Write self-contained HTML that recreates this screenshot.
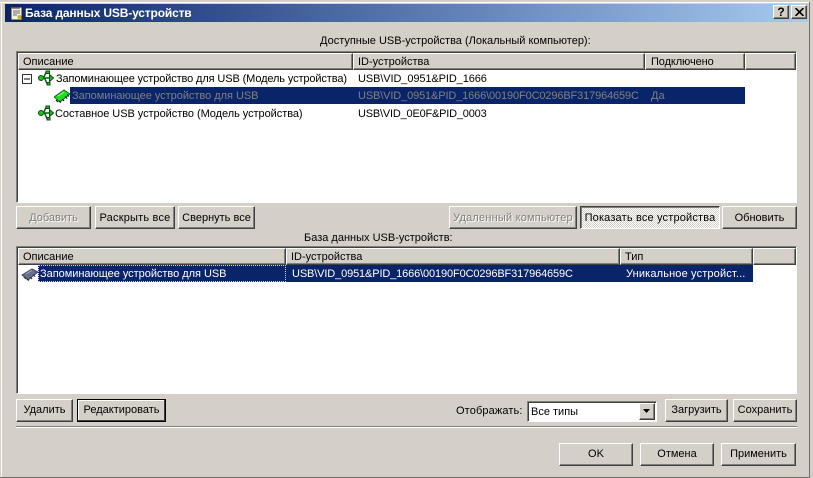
<!DOCTYPE html>
<html lang="ru"><head><meta charset="utf-8"><title>База данных USB-устройств</title>
<style>
html,body{margin:0;padding:0;width:813px;height:478px;overflow:hidden;background:#d4d0c8}
body{position:relative;font:11px/13px "Liberation Sans",sans-serif;color:#000}
.a{position:absolute;white-space:nowrap}
.t{position:absolute;white-space:nowrap;line-height:13px}
.btn{position:absolute;box-sizing:border-box;background:#d4d0c8;border:1px solid;border-color:#fff #404040 #404040 #fff;box-shadow:inset -1px -1px 0 #808080;text-align:center;line-height:21px;white-space:nowrap}
.up{line-height:23px}
.dis{color:#808080;text-shadow:1px 1px 0 #fff}
.def{border:1px solid #000;box-shadow:inset -1px -1px 0 #404040,inset 1px 1px 0 #fff;line-height:21px}
.chk{border-color:#404040 #fff #fff #404040;box-shadow:inset 1px 1px 0 #808080;background:repeating-conic-gradient(#fff 0 25%,#d4d0c8 0 50%) 0 0/2px 2px}
.list{position:absolute;box-sizing:border-box;background:#fff;border:1px solid;border-color:#808080 #fff #fff #808080;box-shadow:inset 1px 1px 0 #404040}
.hd{position:absolute;box-sizing:border-box;height:17px;background:#d4d0c8;border:1px solid;border-color:#fff #404040 #404040 #fff;box-shadow:inset -1px -1px 0 #808080;padding-left:4px;line-height:17px;white-space:nowrap}
.sel{position:absolute;background:#0a246a}
</style></head><body>
<div class="a" style="left:0;top:2px;width:810px;height:1px;background:#fff"></div>
<div class="a" style="left:1px;top:2px;width:1px;height:475px;background:#fff"></div>
<div class="a" style="left:0;top:477px;width:810px;height:1px;background:#6e6e6e"></div>
<div class="a" style="left:809px;top:2px;width:1px;height:476px;background:#6e6e6e"></div>

<div class="a" style="left:5px;top:4px;width:803px;height:18px;background:linear-gradient(90deg,#0a246a,#a6caf0)"></div>
<svg class="a" style="left:9px;top:6px" width="15" height="15" viewBox="0 0 15 15"><rect x="2" y="1" width="11" height="13" fill="#f4f2e8" stroke="#222"/><path d="M4 1v2M6 1v2M8 1v2M10 1v2" stroke="#222"/><path d="M4 5h7M4 7h7M4 9h4" stroke="#666"/><circle cx="10.500" cy="11" r="2" fill="#c8b020"/></svg>
<div class="t" style="left:25px;top:7px;color:#fff;font-weight:bold;font-size:12px;letter-spacing:-.16px">База данных USB-устройств</div>
<div class="btn" style="left:773px;top:5px;width:16px;height:14px;line-height:12px;font-weight:bold;font-size:12px">?</div>
<div class="btn" style="left:791px;top:5px;width:16px;height:14px"><svg style="position:absolute;left:3px;top:2px" width="9" height="8" viewBox="0 0 9 8"><path d="M0.500 0L8.500 8M8.500 0L0.500 8" stroke="#000" stroke-width="1.600"/></svg></div>

<div class="t" style="left:320px;top:35px">Доступные USB-устройства (Локальный компьютер):</div>

<div class="list" style="left:16px;top:51px;width:781px;height:152px"></div>
<div class="hd" style="left:18px;top:53px;width:335px">Описание</div>
<div class="hd" style="left:353px;top:53px;width:292px">ID-устройства</div>
<div class="hd" style="left:645px;top:53px;width:100px;padding-left:5px;letter-spacing:-.1px">Подключено</div>
<div class="hd" style="left:745px;top:53px;width:51px"></div>

<svg class="a" style="left:22px;top:74px" width="10" height="10"><rect x=".5" y=".5" width="9" height="9" fill="#fff" stroke="#333"/><path d="M2 5h6" stroke="#000"/></svg>
<svg class="a" style="left:38px;top:70px" width="16" height="16" viewBox="0 0 16 16"><path d="M3 8h9M5.500 8L8 2.500h1M6.500 8L9 13.500h1" fill="none" stroke="#0a5a10" stroke-width="1.500"/><circle cx="3" cy="8" r="2.500" fill="#18c818" stroke="#0a4a10"/><path d="M11.500 4.500L15.500 8l-4 3.500z" fill="#18c818" stroke="#0a4a10"/><rect x="8" y="1" width="3.500" height="2.500" fill="#18c818" stroke="#0a4a10"/><rect x="9" y="12.500" width="3" height="2.500" fill="#18c818" stroke="#0a4a10"/></svg>
<div class="t" style="left:56px;top:73px;letter-spacing:-.12px">Запоминающее устройство для USB (Модель устройства)</div>
<div class="t" style="left:358px;top:73px;letter-spacing:-.1px">USB\VID_0951&amp;PID_1666</div>

<div class="sel" style="left:70px;top:87px;width:675px;height:17px"></div>
<svg class="a" style="left:54px;top:88px" width="16" height="15" viewBox="0 0 16 15"><path d="M0 9L10 2l6 4-10 8z" fill="#1fe01f" stroke="#0a4a0a" stroke-width=".8"/><path d="M2 12l2 2M5 13l2 1.500M8 11l2 2M11 8.500l2 2M13 6.500l2 2" stroke="#111" stroke-width="1.200"/><path d="M4 8l6-4" stroke="#a0f8a0"/></svg>
<div class="t" style="left:72px;top:90px;color:#808080;letter-spacing:-.03px">Запоминающее устройство для USB</div>
<div class="t" style="left:358px;top:90px;color:#808080;letter-spacing:-.13px">USB\VID_0951&amp;PID_1666\00190F0C0296BF317964659C</div>
<div class="t" style="left:651px;top:90px;color:#808080">Да</div>

<svg class="a" style="left:38px;top:105px" width="16" height="16" viewBox="0 0 16 16"><path d="M3 8h9M5.500 8L8 2.500h1M6.500 8L9 13.500h1" fill="none" stroke="#0a5a10" stroke-width="1.500"/><circle cx="3" cy="8" r="2.500" fill="#18c818" stroke="#0a4a10"/><path d="M11.500 4.500L15.500 8l-4 3.500z" fill="#18c818" stroke="#0a4a10"/><rect x="8" y="1" width="3.500" height="2.500" fill="#18c818" stroke="#0a4a10"/><rect x="9" y="12.500" width="3" height="2.500" fill="#18c818" stroke="#0a4a10"/></svg>
<div class="t" style="left:55px;top:108px;letter-spacing:-.05px">Составное USB устройство (Модель устройства)</div>
<div class="t" style="left:358px;top:108px;letter-spacing:-.2px">USB\VID_0E0F&amp;PID_0003</div>

<div class="btn dis up" style="left:16px;top:206px;width:75px;height:23px">Добавить</div>
<div class="btn up" style="left:95px;top:206px;width:80px;height:23px;letter-spacing:.2px">Раскрыть все</div>
<div class="btn up" style="left:178px;top:206px;width:77px;height:23px">Свернуть все</div>
<div class="btn dis up" style="left:449px;top:206px;width:128px;height:23px;letter-spacing:.2px">Удаленный компьютер</div>
<div class="btn chk up" style="left:580px;top:206px;width:140px;height:23px;letter-spacing:.17px">Показать все устройства</div>
<div class="btn up" style="left:722px;top:206px;width:75px;height:23px">Обновить</div>

<div class="t" style="left:304px;top:232px">База данных USB-устройств:</div>

<div class="list" style="left:16px;top:246px;width:781px;height:148px"></div>
<div class="hd" style="left:18px;top:248px;width:268px">Описание</div>
<div class="hd" style="left:286px;top:248px;width:334px">ID-устройства</div>
<div class="hd" style="left:620px;top:248px;width:133px">Тип</div>
<div class="hd" style="left:753px;top:248px;width:43px"></div>

<div class="sel" style="left:38px;top:265px;width:715px;height:17px"></div>
<div class="a" style="left:38px;top:265px;width:248px;height:17px;box-sizing:border-box;border:1px dotted #e8d890"></div>
<svg class="a" style="left:21px;top:266px" width="17" height="15" viewBox="0 0 17 15"><path d="M1 9L11 3l6 3-10 8z" fill="#66708c" stroke="#3c4458"/><path d="M3 11l2 2M6 13l2 1.500M9 11l2 2M12 8.500l2 2" stroke="#333" stroke-width="1.200"/><path d="M5 8l6-4" stroke="#a8b0c8"/></svg>
<div class="t" style="left:40px;top:268px;color:#fff;letter-spacing:-.03px">Запоминающее устройство для USB</div>
<div class="t" style="left:292px;top:268px;color:#fff;letter-spacing:-.13px">USB\VID_0951&amp;PID_1666\00190F0C0296BF317964659C</div>
<div class="t" style="left:626px;top:268px;color:#fff;letter-spacing:.15px">Уникальное устройст...</div>

<div class="btn" style="left:16px;top:399px;width:57px;height:23px">Удалить</div>
<div class="btn def" style="left:77px;top:399px;width:89px;height:23px">Редактировать</div>
<div class="t" style="left:456px;top:405px;letter-spacing:.12px">Отображать:</div>
<div class="a" style="left:527px;top:401px;width:130px;height:21px;box-sizing:border-box;background:#fff;border:1px solid;border-color:#808080 #fff #fff #808080;box-shadow:inset 1px 1px 0 #404040"></div>
<div class="t" style="left:531px;top:406px">Все типы</div>
<div class="btn" style="left:639px;top:403px;width:16px;height:17px"><svg style="position:absolute;left:3px;top:5px" width="8" height="5"><path d="M0 0h7L3.500 4z" fill="#000"/></svg></div>
<div class="btn" style="left:665px;top:399px;width:63px;height:23px">Загрузить</div>
<div class="btn" style="left:733px;top:399px;width:64px;height:23px">Сохранить</div>

<div class="a" style="left:16px;top:426px;width:781px;height:1px;background:#808080"></div>
<div class="a" style="left:16px;top:427px;width:781px;height:1px;background:#fff"></div>

<div class="btn" style="left:559px;top:443px;width:74px;height:23px">OK</div>
<div class="btn" style="left:640px;top:443px;width:74px;height:23px">Отмена</div>
<div class="btn" style="left:721px;top:443px;width:75px;height:23px">Применить</div>
</body></html>
